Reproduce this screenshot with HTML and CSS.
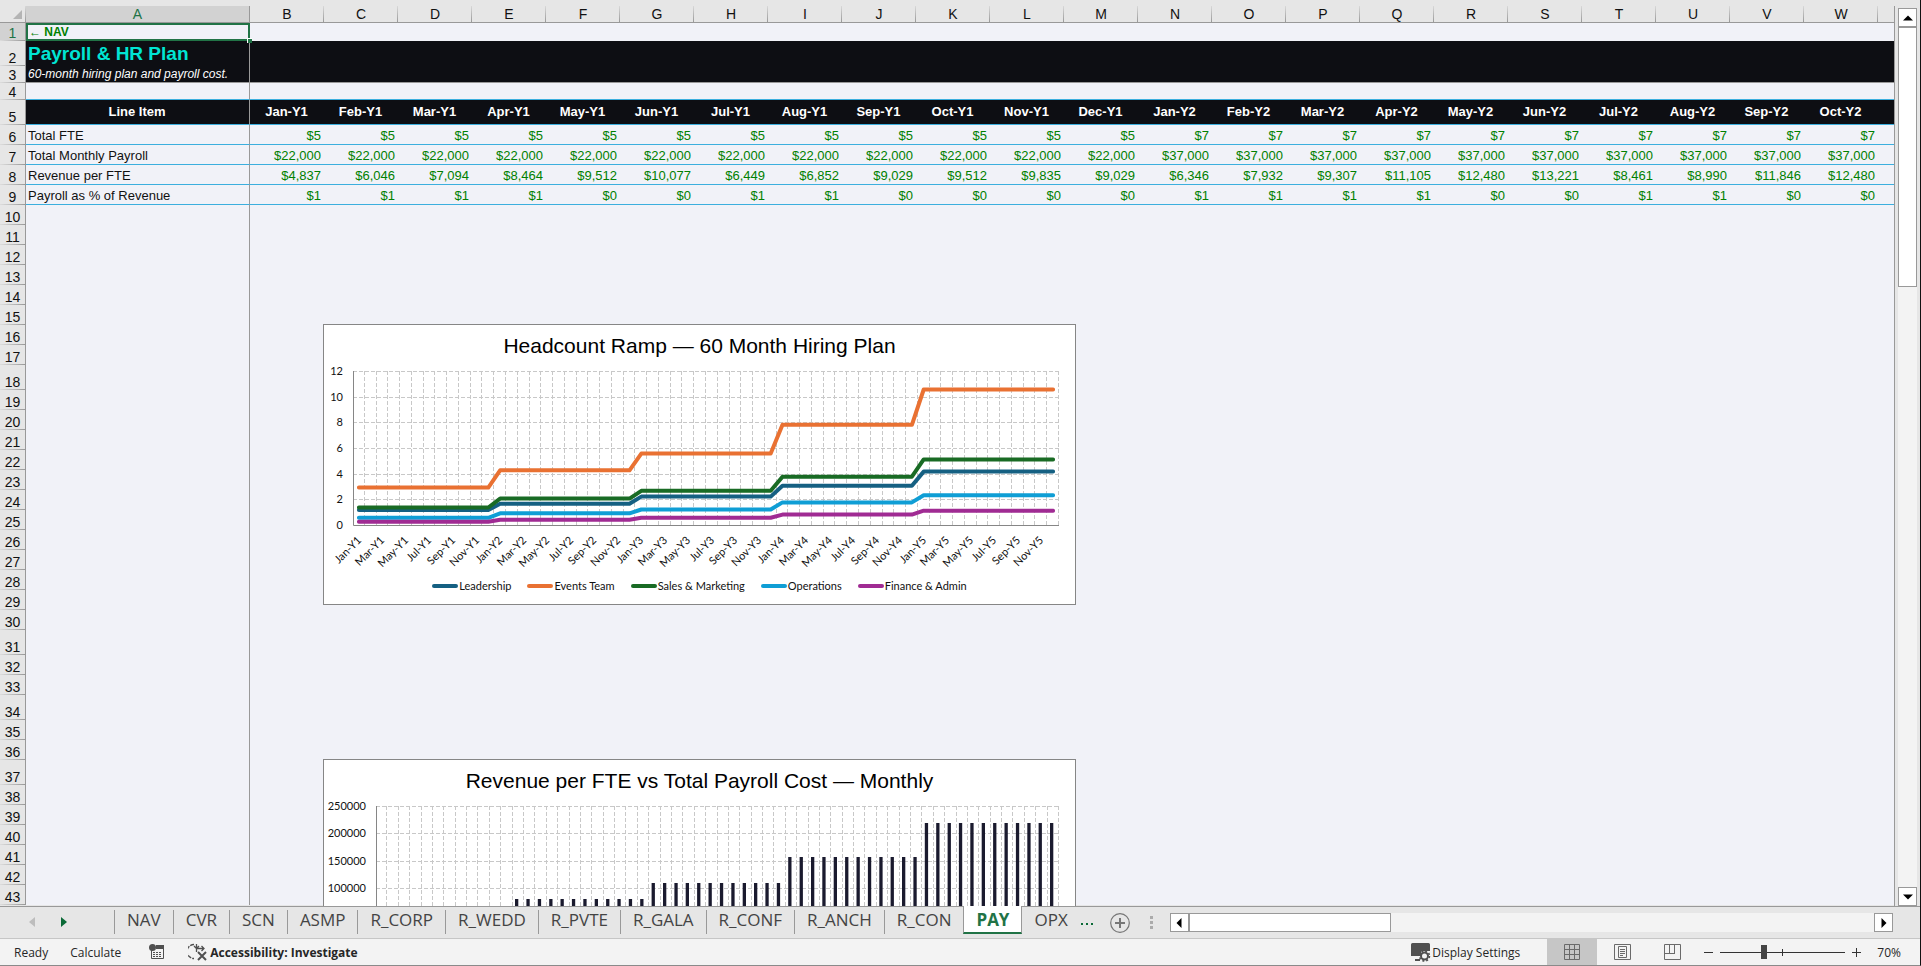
FILE: index.html
```html
<!DOCTYPE html>
<html lang="en">
<head>
    <meta charset="UTF-8">
    <meta name="viewport" content="width=device-width, initial-scale=1.0">
    <title>Payroll &amp; HR Plan</title>
    <link rel="stylesheet" href="styles.css">
</head>
<body>

<main class="workspace">
    <div class="sheet">
        <table class="grid">
            <colgroup id="cols"></colgroup>
            <thead>
                <tr id="letters"></tr>
            </thead>
            <tbody id="rows"></tbody>
        </table>

        <section class="chart chart-headcount">
            <h2>Headcount Ramp — 60 Month Hiring Plan</h2>
            <svg id="headcount" class="plot" width="751" height="214"></svg>
            <ul class="legend">
                <li><i class="leadership"></i>Leadership</li>
                <li><i class="events"></i>Events Team</li>
                <li><i class="sales"></i>Sales &amp; Marketing</li>
                <li><i class="operations"></i>Operations</li>
                <li><i class="finance"></i>Finance &amp; Admin</li>
            </ul>
        </section>

        <section class="chart chart-payroll">
            <h2>Revenue per FTE vs Total Payroll Cost — Monthly</h2>
            <svg id="payroll" class="plot" width="751" height="214"></svg>
        </section>
    </div>

    <div class="scroll-v">
        <button class="scroll-btn" aria-label="Scroll up"><svg width="10" height="6"><path d="M0 5.500L5 0.500L10 5.500z"/></svg></button>
        <div class="thumb"></div>
        <button class="scroll-btn last" aria-label="Scroll down"><svg width="10" height="6"><path d="M0 0.500L5 5.500L10 0.500z"/></svg></button>
    </div>
</main>

<nav class="tabbar">
    <button class="arrow" aria-label="Previous sheet"><svg width="6" height="10"><path d="M6 0v10L0 5z" fill="#bdbdbd"/></svg></button>
    <button class="arrow" aria-label="Next sheet"><svg width="6" height="10"><path d="M0 0v10l6-5z" fill="#0b6a37"/></svg></button>
    <div class="tabs">
        <a href="#">NAV</a>
        <a href="#">CVR</a>
        <a href="#">SCN</a>
        <a href="#">ASMP</a>
        <a href="#">R_CORP</a>
        <a href="#">R_WEDD</a>
        <a href="#">R_PVTE</a>
        <a href="#">R_GALA</a>
        <a href="#">R_CONF</a>
        <a href="#">R_ANCH</a>
        <a href="#">R_CON</a>
        <a href="#" class="active">PAY</a>
        <a href="#">OPX</a>
    </div>
    <button class="more" aria-label="More sheets"><svg width="14" height="4"><path d="M1 1h2v2H1zM6 1h2v2H6zM11 1h2v2h-2z" fill="#0b6a37"/></svg></button>
    <button class="add" aria-label="New sheet"><svg width="20" height="20"><circle cx="10" cy="10" r="9.300" fill="none" stroke="#767676" stroke-width="1.200"/><path d="M10 5v10M5 10h10" stroke="#767676" stroke-width="2"/></svg></button>
    <svg class="grip" width="3" height="13"><path d="M0 0h3v3H0zM0 5h3v3H0zM0 10h3v3H0z" fill="#ababab"/></svg>
    <div class="scroll-h">
        <button class="scroll-btn" aria-label="Scroll left"><svg width="6" height="10"><path d="M5.500 0v10L0.500 5z"/></svg></button>
        <div class="thumb"></div>
        <button class="scroll-btn last" aria-label="Scroll right"><svg width="6" height="10"><path d="M0.500 0v10l5-5z"/></svg></button>
    </div>
</nav>

<footer class="status">
    <span class="ready">Ready</span>
    <span class="calc">Calculate</span>
    <svg class="macro" width="16" height="16">
        <path d="M2.500 6v8.500h12V3H8" fill="none" stroke="#505050"/>
        <path d="M7 1h8v4H7z" fill="#505050"/>
        <circle cx="3.500" cy="3.500" r="3.500" fill="#505050"/>
        <path d="M4 8.500h9M4 10.500h9M4 12.500h9" stroke="#505050" stroke-dasharray="2 1"/>
    </svg>
    <svg class="access" width="20" height="18">
        <path d="M6 1.500A7 7 0 0 0 6 15.500" fill="none" stroke="#505050" stroke-width="1.300" stroke-dasharray="4 1"/>
        <path d="M8.500 1v4M6 3l2.500 2.500L11 3M8 5.500h8M13.500 3l2.500 2.500-2.500 2.500M8.500 6v3" fill="none" stroke="#505050" stroke-width="1.300"/>
        <path d="M10 9l8 8M18 9l-8 8" stroke="#505050" stroke-width="2"/>
    </svg>
    <b class="access-label">Accessibility: Investigate</b>

    <button class="display">
        <svg width="20" height="19">
            <path d="M1.500 0h16q1.500 0 1.500 1.500V8H10v5H0V1.500Q0 0 1.500 0zM4 16h5v2H4z" fill="#505050"/>
            <circle cx="13.500" cy="13" r="3.500" fill="#f3f3f3" stroke="#505050" stroke-width="2"/>
            <circle cx="13.500" cy="13" r="5" fill="none" stroke="#505050" stroke-width="1.500" stroke-dasharray="2 1.930"/>
        </svg>Display Settings
    </button>
    <button class="view on" aria-label="Normal"><svg width="16" height="16"><path d="M.5.500h15v15H.5zM5.500 0v16M10.500 0v16M0 5.500h16M0 10.500h16" fill="none" stroke="#6a6a6a"/></svg></button>
    <button class="view" aria-label="Page Layout"><svg width="17" height="16"><path d="M.5.500h16v15H.5zM4.500 2.500h8v11h-8zM6 5.500h5M6 7.500h5M6 9.500h5M6 11.500h3" fill="none" stroke="#6a6a6a"/></svg></button>
    <button class="view" aria-label="Page Break Preview"><svg width="17" height="16"><path d="M.5.500h16v15H.5zM5.500 0v9.500M10.500 0v9.500M0 9.500h11" fill="none" stroke="#6a6a6a"/></svg></button>
    <button class="zoom-btn" aria-label="Zoom out"><svg width="9" height="9"><path d="M0 4.500h9" stroke="#333"/></svg></button>
    <input class="zoom" type="range" min="0" max="100" value="34" aria-label="Zoom">
    <button class="zoom-btn" aria-label="Zoom in"><svg width="9" height="9"><path d="M0 4.500h9M4.500 0v9" stroke="#333"/></svg></button>
    <span class="percent">70%</span>
</footer>

<script src="script.js"></script>
</body>
</html>
```
FILE: styles.css
```css
* {
    box-sizing: border-box;
}
body {
    margin: 0;
    height: 100vh;
    display: flex;
    flex-direction: column;
    overflow: hidden;
    background-color: #e6e6e6;
    border-right: 1px solid #111;
    border-bottom: 1px solid #8a8a8a;
    font-family: "Open Sans", "Noto Sans", sans-serif;
    font-size: 12px;
    color: #262626;
}
button {
    padding: 0;
    border: none;
    background: none;
    font: inherit;
    color: inherit;
    display: flex;
    align-items: center;
    justify-content: center;
}
svg {
    display: block;
    flex: none;
}

/* sheet */
.workspace {
    flex: 1;
    min-height: 0;
    display: flex;
    padding-top: 6px;
}
.sheet {
    flex: 1;
    min-width: 0;
    position: relative;
    overflow: hidden;
    border-right: 1px solid #999;
}
.grid {
    width: 1952px;
    table-layout: fixed;
    border-collapse: separate;
    border-spacing: 0;
    font-family: "Liberation Sans", Arial, sans-serif;
    font-size: 13px;
    line-height: 16px;
    color: #111;
}
.grid .num-col {
    width: 26px;
}
.grid .item-col {
    width: 224px;
}
.grid .month-col {
    width: 74px;
}
.grid th,
.grid td {
    padding: 0 3px 0 2px;
    white-space: nowrap;
    overflow: hidden;
    vertical-align: bottom;
}
.grid td {
    background-color: #f1f2f8;
    color: #008000;
    text-align: right;
}
.grid thead th {
    height: 17px;
    padding: 0;
    font-size: 14px;
    font-weight: normal;
    text-align: center;
    border-bottom: 1px solid #999;
    background: linear-gradient(#d8d8d8, #999) right / 1px 100% no-repeat;
}
.grid thead .selected {
    background: #d2d2d2;
    border-right: 1px solid #999;
    color: #217346;
}
.grid thead .corner {
    padding: 3px 3px 3px 13px;
}
.grid .row-num {
    padding: 0;
    height: 20px;
    font-size: 14px;
    font-weight: normal;
    text-align: center;
    background: linear-gradient(90deg, #ddd, #999) bottom / 100% 1px no-repeat #e6e6e6;
    border-right: 1px solid #999;
}
.grid .row-num.selected {
    background-color: #d2d2d2;
    color: #217346;
}
.grid .item {
    padding-left: 2px;
    border-right: 1px solid #999;
    background-color: #f1f2f8;
    font-weight: normal;
    text-align: left;
}
.grid .tall .row-num {
    height: 25px;
}
.grid .row-1 .row-num {
    height: 18px;
}
.grid .row-1 .item {
    border: 2px solid #217346;
    padding: 0 1px;
    line-height: 14px;
}
.row-1 a {
    display: block;
    font-weight: bold;
    font-size: 12px;
    color: #008000;
    text-decoration: none;
}
.handle {
    position: absolute;
    left: 247px;
    top: 32px;
    width: 5px;
    height: 5px;
    background-color: #217346;
    border-left: 1px solid #fff;
    border-top: 1px solid #fff;
}
.grid .row-3 .row-num,
.grid .row-4 .row-num {
    height: 17px;
}
.grid .banner td,
.grid .banner .item {
    background-color: #0d0e13;
}
.grid .row-2 .item {
    color: #00e5d4;
    font-size: 19px;
    font-weight: bold;
    line-height: 24px;
}
.grid .row-3 .item {
    color: #fff;
    font-size: 12px;
    font-style: italic;
}
.grid .row-3 td,
.grid .row-3 .item {
    border-bottom: 1px solid #999;
}
.grid .lined td,
.grid .lined .item {
    border-bottom: 1px solid #3cafde;
}
.grid .row-5 .months,
.grid .row-5 .item {
    background-color: #0d0e13;
    color: #fff;
    font-weight: bold;
    text-align: center;
    vertical-align: middle;
}

/* charts */
.chart {
    position: absolute;
    left: 323px;
    width: 753px;
    height: 281px;
    background-color: #fff;
    border: 1px solid #868686;
    font-family: Lato, "Open Sans", sans-serif;
    font-size: 11px;
    color: #111;
}
.chart-headcount {
    top: 318px;
}
.chart-payroll {
    top: 753px;
}
.chart h2 {
    margin: 9px 0 3px;
    text-align: center;
    font: 21px/24px "Liberation Sans", Arial, sans-serif;
    color: #000;
}
.plot .gridline {
    stroke: #c8c8c8;
    stroke-dasharray: 4 2;
    fill: none;
}
.plot .axis {
    stroke: #868686;
    fill: none;
}
.plot .series {
    fill: none;
    stroke-width: 4;
    stroke-linecap: round;
    stroke-linejoin: round;
}
.plot text {
    text-anchor: end;
    fill: #111;
}
.plot .bar {
    fill: #1a1a2e;
}
.legend {
    margin: 3px 0 0;
    padding: 0;
    display: flex;
    justify-content: center;
    gap: 16px;
    list-style: none;
    line-height: 16px;
}
.legend li {
    display: flex;
    align-items: center;
    gap: 1px;
}
.legend i {
    width: 26px;
    height: 4px;
    border-radius: 2px;
}
.leadership { background-color: #156082; stroke: #156082; }
.events { background-color: #e97132; stroke: #e97132; }
.sales { background-color: #196b24; stroke: #196b24; }
.operations { background-color: #0f9ed5; stroke: #0f9ed5; }
.finance { background-color: #a02b93; stroke: #a02b93; }

/* scroll bars */
.scroll-btn {
    width: 19px;
    height: 19px;
    flex: none;
    background-color: #fff;
    border: 1px solid #999;
}
.last {
    margin-top: auto;
}
.scroll-v {
    width: 19px;
    margin: 2px 3px 0;
    display: flex;
    flex-direction: column;
    background-color: #f3f3f3;
}
.thumb {
    background-color: #fff;
    border: 1px solid #999;
}
.scroll-v .thumb {
    height: 29%;
}
.scroll-h {
    flex: 1;
    margin: 6px 27px 0 0;
    height: 19px;
    display: flex;
    background-color: #f3f3f3;
}
.scroll-h .thumb {
    width: 202px;
}
.scroll-h .last {
    margin: 0 0 0 auto;
}

/* sheet tabs */
.tabbar {
    height: 32px;
    flex: none;
    display: flex;
    align-items: flex-start;
    border-top: 1px solid #999;
}
.arrow {
    width: 32px;
    height: 30px;
}
.arrow:first-child {
    margin-left: 16px;
}
.tabs {
    margin-left: 34px;
    display: flex;
    font-size: 17px;
    line-height: 20px;
}
.tabs a {
    height: 24px;
    margin-top: 3px;
    padding: 0 12px;
    border-left: 1px solid #999;
    color: #444;
    text-decoration: none;
}
.tabs .active {
    height: 28px;
    margin-top: -1px;
    padding: 4px 12px 0;
    border-bottom: 2px solid #217346;
    border-right: 1px solid #999;
    background-color: #fff;
    color: #217346;
    font-weight: bold;
}
.tabs .active + a {
    border-left: none;
}
.more {
    height: 34px;
}
.add {
    margin: 6px 20px 0 16px;
}
.grip {
    margin: 9px 17px 0 0;
}

/* status bar */
.status {
    height: 27px;
    flex: none;
    display: flex;
    align-items: center;
    background-color: #f3f3f3;
    border-top: 1px solid #c6c6c6;
}
.ready {
    margin-left: 14px;
}
.calc {
    margin-left: 22px;
}
.macro {
    margin-left: 28px;
}
.access {
    margin-left: 23px;
}
.access-label {
    margin-left: 2px;
}
.display {
    margin-left: auto;
    margin-right: 27px;
    gap: 1px;
}
.view {
    width: 50px;
    height: 100%;
}
.view.on {
    background-color: #c6c6c6;
}
.zoom-btn {
    width: 23px;
    height: 24px;
}
.zoom {
    appearance: none;
    width: 125px;
    height: 16px;
    margin: 0;
    background:
        linear-gradient(#333, #333) 62px 5px / 1px 7px no-repeat,
        linear-gradient(#333, #333) center / 100% 1px no-repeat;
}
.zoom::-webkit-slider-thumb {
    appearance: none;
    width: 6px;
    height: 14px;
    background-color: #444;
}
.percent {
    margin: 0 19px 0 9px;
}
```
FILE: script.js
```js
const NAMES = ["Jan", "Feb", "Mar", "Apr", "May", "Jun", "Jul", "Aug", "Sep", "Oct", "Nov", "Dec"];
const COLUMNS = 23;
const TALL_ROWS = [2, 5, 18, 31, 34, 37];
const LAST_ROW = 43;

const months = [];
for (let i = 0; i < 60; i++) {
    months.push(NAMES[i % 12] + "-Y" + (Math.floor(i / 12) + 1));
}

const revenue = ["4,837", "6,046", "7,094", "8,464", "9,512", "10,077", "6,449", "6,852", "9,029", "9,512", "9,835", "9,029",
    "6,346", "7,932", "9,307", "11,105", "12,480", "13,221", "8,461", "8,990", "11,846", "12,480"];
const share = [1, 1, 1, 1, 0, 0, 1, 1, 0, 0, 0, 0, 1, 1, 1, 1, 0, 0, 1, 1, 0, 0];

// row number -> first column and the value of each month
const content = {
    1: ['<a href="#">← NAV</a>'],
    2: ["Payroll &amp; HR Plan"],
    3: ["60-month hiring plan and payroll cost."],
    5: ["Line Item", i => months[i]],
    6: ["Total FTE", i => i < 12 ? "$5" : "$7"],
    7: ["Total Monthly Payroll", i => i < 12 ? "$22,000" : "$37,000"],
    8: ["Revenue per FTE", i => "$" + revenue[i]],
    9: ["Payroll as % of Revenue", i => "$" + share[i]]
};

function buildGrid() {
    let cols = '<col class="num-col"><col class="item-col">';
    let letters = '<th class="corner"><svg width="9" height="9"><path d="M9 0v9H0z" fill="#b4b4b4"/></svg></th><th class="selected">A</th>';
    for (let i = 0; i < COLUMNS; i++) {
        cols += '<col class="month-col">';
        // the last column is mostly outside the window
        letters += "<th>" + (i < 22 ? String.fromCharCode(66 + i) : "") + "</th>";
    }
    document.getElementById("cols").innerHTML = cols;
    document.getElementById("letters").innerHTML = letters;

    let html = "";
    for (let r = 1; r <= LAST_ROW; r++) {
        const row = content[r] || [""];
        let names = "row-" + r;
        if (TALL_ROWS.includes(r)) names += " tall";
        if (r === 2 || r === 3) names += " banner";
        if (r >= 4 && r <= 9) names += " lined";
        html += `<tr class="${names}"><th class="row-num${r === 1 ? " selected" : ""}">${r}</th><th class="item">${row[0]}</th>`;
        if (row[1]) {
            for (let i = 0; i < COLUMNS; i++) {
                html += `<td class="months">${i < 22 ? row[1](i) : ""}</td>`;
            }
        } else {
            html += `<td colspan="${COLUMNS}"></td>`;
        }
        html += "</tr>";
    }
    document.getElementById("rows").innerHTML = html;
    document.querySelector(".sheet").insertAdjacentHTML("beforeend", '<span class="handle"></span>');
}

function frame(left, right, top, bottom, max, step, firstLabel) {
    let svg = "";
    const width = (right - left) / 60;
    for (let i = 1; i <= 60; i++) {
        const x = Math.round(left + i * width) - 0.5;
        svg += `<path class="gridline" d="M${x} ${top}V${bottom}"/>`;
    }
    for (let v = 0; v <= max; v += step) {
        const y = Math.round(bottom - v / max * (bottom - top)) + 0.5;
        if (v > 0) svg += `<path class="gridline" d="M${left} ${y}H${right}"/>`;
        if (v >= firstLabel) svg += `<text x="${left - 10}" y="${y + 3}">${v}</text>`;
    }
    svg += `<path class="axis" d="M${left + 0.5} ${top}V${bottom + 0.5}H${right}"/>`;
    return svg;
}

function drawHeadcount() {
    const left = 29, right = 735, top = 10, bottom = 164;
    const step = (right - left) / 60;
    const series = {
        leadership: [1.2, 1.7, 2.25, 3.1, 4.2],
        events: [2.95, 4.3, 5.6, 7.85, 10.6],
        sales: [1.4, 2.1, 2.7, 3.8, 5.15],
        operations: [0.6, 0.95, 1.25, 1.8, 2.35],
        finance: [0.3, 0.45, 0.6, 0.85, 1.15]
    };
    let svg = frame(left, right, top, bottom, 12, 2, 0);
    for (const name in series) {
        const points = months.map((m, i) => {
            const value = series[name][Math.floor(i / 12)];
            return (left + (i + 0.5) * step).toFixed(1) + "," + (bottom + 0.5 - value / 12 * (bottom - top)).toFixed(1);
        });
        svg += `<polyline class="series ${name}" points="${points.join(" ")}"/>`;
    }
    for (let i = 0; i < 60; i += 2) {
        const x = Math.round(left + (i + 0.5) * step) + 3;
        svg += `<text transform="translate(${x} ${bottom + 16}) rotate(-45)">${months[i]}</text>`;
    }
    document.getElementById("headcount").innerHTML = svg;
}

function drawPayroll() {
    const left = 52, right = 735, top = 10, bottom = 147;
    const step = (right - left) / 60;
    const cost = [22000, 80000, 110000, 157000, 219000];
    let svg = frame(left, right, top, bottom, 250000, 50000, 100000);
    for (let i = 0; i < 60; i++) {
        const height = cost[Math.floor(i / 12)] / 250000 * (bottom - top);
        svg += `<rect class="bar" x="${(left + i * step + 2.4).toFixed(1)}" y="${Math.round(bottom - height)}" width="3.300" height="${Math.round(height)}"/>`;
    }
    document.getElementById("payroll").innerHTML = svg;
}

buildGrid();
drawHeadcount();
drawPayroll();
```
